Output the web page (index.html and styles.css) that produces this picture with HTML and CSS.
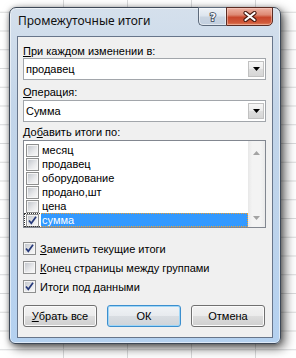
FILE: index.html
```html
<!DOCTYPE html>
<html lang="ru">
<head>
<meta charset="utf-8">
<title>Промежуточные итоги</title>
<link rel="stylesheet" href="styles.css">
</head>
<body>
<div class="window">
  <div class="titlebar">
    <span class="title">Промежуточные итоги</span>
    <div class="caption-btns">
      <span class="cbtn help"><svg width="10" height="12" viewBox="0 0 10 12"><text x="5" y="10" text-anchor="middle" class="qmark">?</text></svg></span>
      <span class="cbtn close"><svg width="14" height="11" viewBox="0 0 14 11"><path d="M2.5 2 L11.5 9 M11.5 2 L2.5 9" class="x-out"/><path d="M2.5 2 L11.5 9 M11.5 2 L2.5 9" class="x-in"/></svg></span>
    </div>
  </div>
  <div class="client">
    <div class="lbl first"><u>П</u>ри каждом изменении в:</div>
    <div class="combo"><span class="combo-text">продавец</span><span class="dd"><svg width="7" height="4" viewBox="0 0 7 4"><path d="M0 0 H7 L3.5 4 Z" fill="#000"/></svg></span></div>
    <div class="lbl second"><u>О</u>перация:</div>
    <div class="combo"><span class="combo-text">Сумма</span><span class="dd"><svg width="7" height="4" viewBox="0 0 7 4"><path d="M0 0 H7 L3.5 4 Z" fill="#000"/></svg></span></div>
    <div class="lbl third">До<u>б</u>авить итоги по:</div>
    <div class="list">
      <div class="items">
        <div class="row"><span class="cb"></span><span class="item">месяц</span></div>
        <div class="row"><span class="cb"></span><span class="item">продавец</span></div>
        <div class="row"><span class="cb"></span><span class="item">оборудование</span></div>
        <div class="row"><span class="cb"></span><span class="item">продано,шт</span></div>
        <div class="row"><span class="cb"></span><span class="item">цена</span></div>
        <div class="row sel"><span class="cb checked"><svg width="9" height="9" viewBox="0 0 9 9"><path d="M1 4.5 L3.3 7.3 L8 0.8" class="tick"/></svg></span><span class="item">сумма</span></div>
      </div>
      <div class="vscroll">
        <svg width="7" height="4" viewBox="0 0 7 4"><path d="M0 4 H7 L3.5 0 Z" fill="#a3a3a3"/></svg>
        <svg width="7" height="4" viewBox="0 0 7 4"><path d="M0 0 H7 L3.5 4 Z" fill="#a3a3a3"/></svg>
      </div>
    </div>
    <div class="checks">
      <div class="crow"><span class="cb checked"><svg width="9" height="9" viewBox="0 0 9 9"><path d="M1 4.5 L3.3 7.3 L8 0.8" class="tick"/></svg></span><span><u>З</u>аменить текущие итоги</span></div>
      <div class="crow"><span class="cb"></span><span><u>К</u>онец страницы между группами</span></div>
      <div class="crow"><span class="cb checked"><svg width="9" height="9" viewBox="0 0 9 9"><path d="M1 4.5 L3.3 7.3 L8 0.8" class="tick"/></svg></span><span>Ито<u>г</u>и под данными</span></div>
    </div>
    <div class="buttons">
      <span class="btn"><u>У</u>брать все</span>
      <span class="btn default">ОК</span>
      <span class="btn">Отмена</span>
    </div>
  </div>
</div>
</body>
</html>
```
FILE: styles.css
```css
html, body {
  margin: 0;
  padding: 0;
}
body {
  width: 296px;
  height: 358px;
  overflow: hidden;
  background-color: #fff;
  background-image:
    linear-gradient(to right, #d9dadb 1px, transparent 1px),
    linear-gradient(to bottom, #d9dadb 1px, transparent 1px);
  background-size: 64px 18.75px;
  background-position: 63px 11.75px;
  font-family: "Liberation Sans", Arial, sans-serif;
  font-size: 11px;
  color: #000;
}
.window {
  position: relative;
  margin: 7px 0 0 9px;
  width: 272px;
  height: 337px;
  box-sizing: border-box;
  border: 1px solid #3d4857;
  border-radius: 7px 7px 6px 6px;
  background: linear-gradient(#d5e0ec, #c3d5e9 30%, #bcd3ec 70%, #b4d1f0);
  box-shadow: 4px 4px 11px rgba(0, 0, 0, 0.6), 0 1px 5px rgba(0, 0, 0, 0.35), inset 0 0 0 1px rgba(255, 255, 255, 0.55);
  padding: 0 7px 5px 7px;
  display: flex;
  flex-direction: column;
}
.titlebar {
  height: 28px;
  flex: none;
}
.title {
  display: block;
  margin: 5px 0 0 1px;
  font-family: "Noto Sans", "Open Sans", sans-serif;
  font-size: 12px;
  line-height: 16px;
  color: #111;
}
.caption-btns {
  position: absolute;
  top: -1px;
  right: 7px;
  display: flex;
}
.cbtn {
  height: 19px;
  box-sizing: border-box;
  display: flex;
  align-items: center;
  justify-content: center;
}
.help {
  width: 28px;
  border: 1px solid #5d6a7b;
  border-right: none;
  border-radius: 0 0 0 5px;
  background: linear-gradient(#eef2f7, #dde5ee 45%, #c9d4e1 55%, #c2cfdf);
  box-shadow: inset 0 0 0 1px rgba(255, 255, 255, 0.5);
}
.close {
  width: 47px;
  border: 1px solid #5a2b22;
  border-radius: 0 0 5px 0;
  background: linear-gradient(#eeb3a4, #de8a74 40%, #c8472c 55%, #d0593a 85%, #e0845e);
  box-shadow: inset 0 0 0 1px rgba(255, 220, 210, 0.45);
}
.qmark {
  font-family: "DejaVu Sans", sans-serif;
  font-weight: bold;
  font-size: 11px;
  fill: #f4f6f9;
  stroke: #34404f;
  stroke-width: 1.6px;
  paint-order: stroke;
}
.x-out {
  stroke: #4a1c12;
  stroke-width: 4.2;
  stroke-linecap: round;
  fill: none;
}
.x-in {
  stroke: #fff;
  stroke-width: 2.2;
  stroke-linecap: round;
  fill: none;
}
.client {
  flex: 1;
  background: #f0f0f0;
  border: 1px solid #67758a;
  padding: 7px 6px 0 5px;
  display: flex;
  flex-direction: column;
}
.lbl {
  line-height: 14px;
  height: 14px;
  white-space: nowrap;
}
.lbl.second {
  margin-top: 5px;
  line-height: 15px;
  height: 15px;
}
.lbl.third {
  margin-top: 3px;
  line-height: 15px;
  height: 15px;
}
.combo {
  height: 22px;
  box-sizing: border-box;
  border: 1px solid #a2a6ab;
  background: #fff;
  display: flex;
  align-items: center;
  padding-left: 2px;
}
.combo-text {
  flex: 1;
}
.dd {
  width: 16px;
  height: 16px;
  box-sizing: border-box;
  margin-right: 1px;
  border: 1px solid #c1c1c1;
  background: linear-gradient(#f7f7f7, #ebebeb 50%, #dedede 51%, #d6d6d6);
  display: flex;
  align-items: center;
  justify-content: center;
}
.list {
  height: 88px;
  box-sizing: border-box;
  border: 1px solid #828790;
  background: #fff;
  display: flex;
}
.items {
  flex: 1;
  padding-top: 2px;
}
.row {
  height: 14px;
  display: flex;
  align-items: center;
  padding-left: 2px;
}
.item {
  flex: 1;
  height: 14px;
  line-height: 14px;
  margin-left: 2px;
  padding-left: 1px;
  box-sizing: border-box;
}
.row.sel {
  position: relative;
}
.row.sel::before {
  content: "";
  position: absolute;
  left: 0;
  top: 0;
  bottom: 0;
  width: 16px;
  border: 1px dotted #333;
  border-right: none;
  box-sizing: border-box;
}
.row.sel .item {
  background: #3399ff;
  color: #fff;
  border: 1px dotted #f0a030;
  border-left: none;
  line-height: 12px;
}
.cb {
  width: 13px;
  height: 13px;
  box-sizing: border-box;
  border: 1px solid #8e8f8f;
  padding: 1px;
  background: linear-gradient(135deg, #c4c8ce, #e8e9eb 60%, #f7f7f7) content-box, #f5f5f5;
  display: flex;
  align-items: center;
  justify-content: center;
  flex: none;
}
.tick {
  fill: none;
  stroke: #26397a;
  stroke-width: 1.7;
}
.vscroll {
  width: 17px;
  background: linear-gradient(to right, #e8e8e8, #f3f3f3 25%, #f3f3f3 75%, #eaeaea);
  display: flex;
  flex-direction: column;
  align-items: center;
  justify-content: space-between;
  padding: 10px 0 7px;
  box-sizing: border-box;
}
.checks {
  margin-top: 11px;
}
.crow {
  height: 19px;
  display: flex;
  align-items: center;
  gap: 4px;
  white-space: nowrap;
}
.buttons {
  margin-top: 9px;
  display: flex;
  gap: 10px;
}
.btn {
  width: 74px;
  height: 22px;
  box-sizing: border-box;
  border: 1px solid #707070;
  border-radius: 3px;
  background: linear-gradient(#f2f2f2, #ebebeb 50%, #dddddd 51%, #cfcfcf);
  box-shadow: inset 0 0 0 1px #fbfbfb;
  display: flex;
  align-items: center;
  justify-content: center;
}
.btn.default {
  border-color: #3c8fce;
  box-shadow: inset 0 0 0 1px #9fd6f7;
  background: linear-gradient(#f0f3f6, #e7eaee 50%, #d9dde2 51%, #cfd4d9);
}
```
